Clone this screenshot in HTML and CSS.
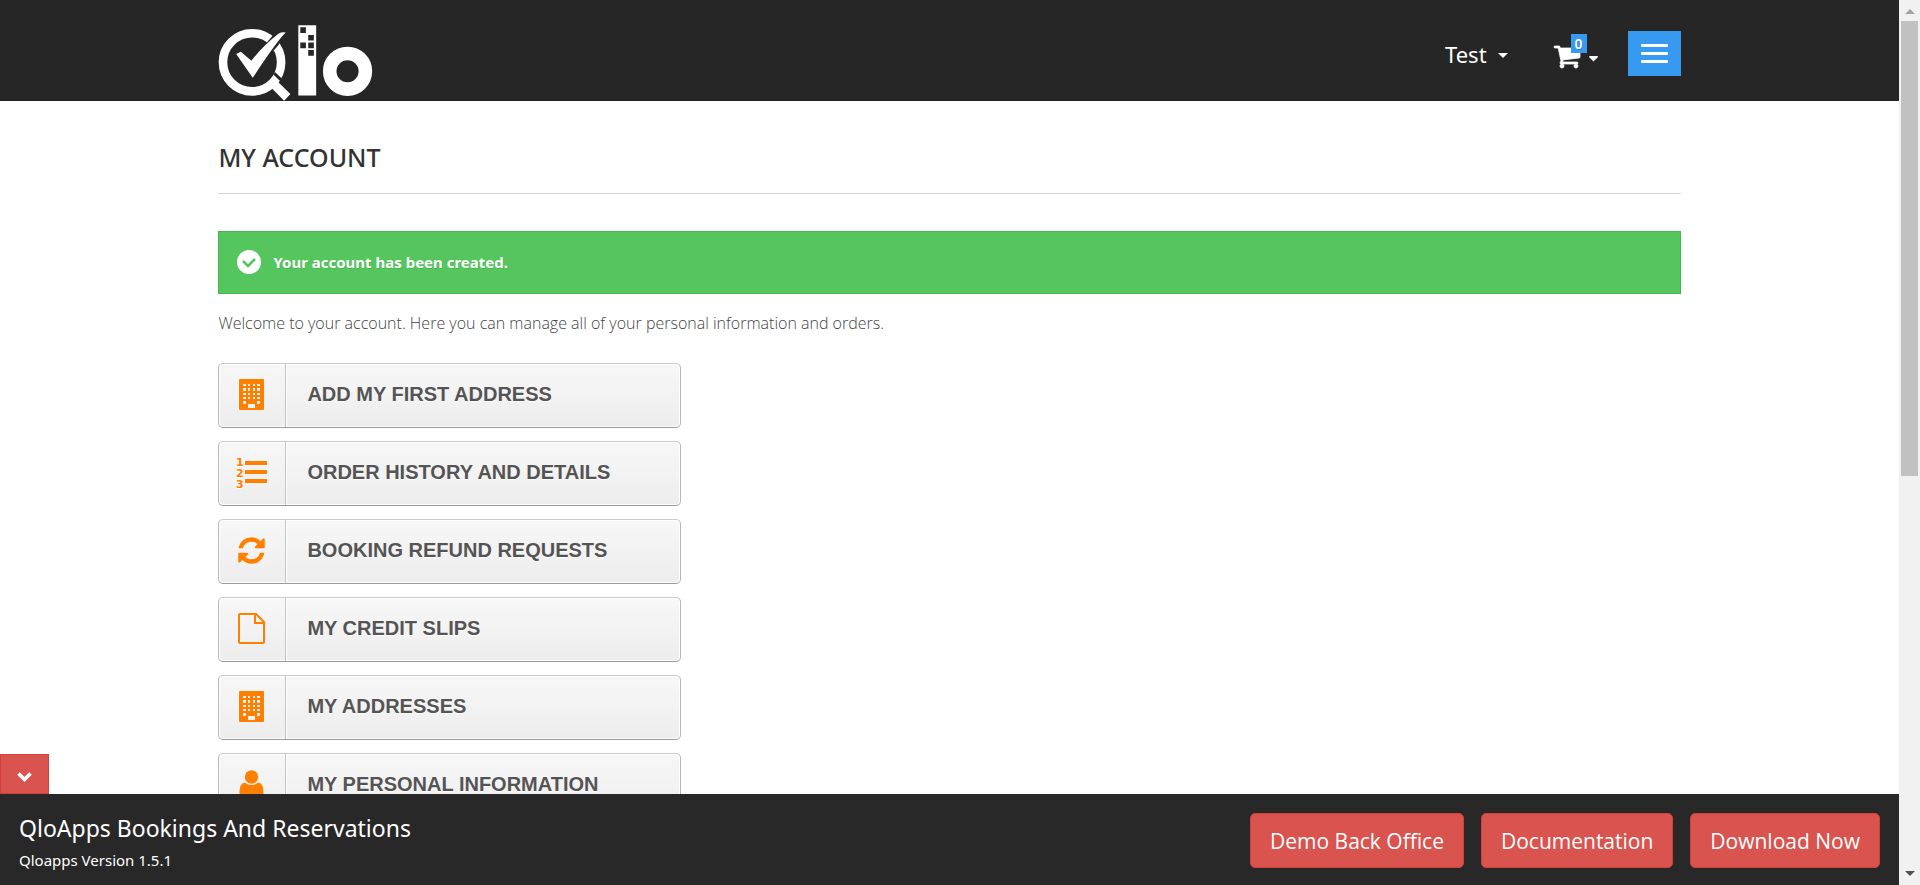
FILE: index.html
```html
<!DOCTYPE html>
<html lang="en">
<head>
<meta charset="utf-8">
<title>My account - QloApps</title>
<link rel="stylesheet" href="styles.css">
</head>
<body>
<svg class="defs" aria-hidden="true">
  <symbol id="building" viewBox="0 0 25 31">
    <path fill-rule="evenodd" d="M1 0h23q1 0 1 1v29q0 1-1 1H1q-1 0-1-1V1q0-1 1-1zM4 5v2h3V5zM9 5v2h2V5zM14 5v2h2V5zM18 5v2h3V5zM4 9v3h3V9zM9 9v3h2V9zM14 9v3h2V9zM18 9v3h3V9zM4 14v2h3v-2zM9 14v2h2v-2zM14 14v2h2v-2zM18 14v2h3v-2zM4 18v2h3v-2zM9 18v2h2v-2zM14 18v2h2v-2zM18 18v2h3v-2zM4 22v3h3v-3zM18 22v3h3v-3zM9 25v4h7v-4z"/>
  </symbol>
</svg>
<div class="window">
  <div class="page">
    <header class="header">
      <div class="container header-row">
        <a class="logo" href="#" aria-label="Qlo">
          <svg viewBox="54 44 468 230">
            <circle cx="155" cy="157" r="88" fill="none" stroke="#fff" stroke-width="26"/>
            <path d="M222 190L252 219" stroke="#262626" stroke-width="9"/>
            <path d="M200 222L219 202L271 253L252 273L217 238z" fill="#fff"/>
            <path d="M192 106L226 66L262 58L234 106L222 120z" fill="#262626"/>
            <path d="M107 132L121 125L153 152Q190 105 236 70Q246 64 257 67Q232 90 157 204z" fill="#fff"/>
            <path d="M295 45h54v212h-54z" fill="#fff"/>
            <path d="M301 51h17v17h-17zM325 74h17v17h-17zM301 97h17v17h-17zM325 97h17v17h-17zM325 120h17v17h-17z" fill="#262626"/>
            <circle cx="444" cy="184" r="54" fill="none" stroke="#fff" stroke-width="41"/>
          </svg>
        </a>
        <nav class="nav">
          <button class="user" type="button">Test<span class="caret"></span></button>
          <button class="cart" type="button" aria-label="Cart">
            <svg class="cart-icon" viewBox="0 0 1792 1792"><path d="M704 1536q0 52-38 90t-90 38-90-38-38-90 38-90 90-38 90 38 38 90zm896 0q0 52-38 90t-90 38-90-38-38-90 38-90 90-38 90 38 38 90zm128-1088v512q0 24-16.5 42.5t-40.5 21.5l-1044 122q13 60 13 70 0 16-24 64h920q26 0 45 19t19 45-19 45-45 19h-1024q-26 0-45-19t-19-45q0-11 8-31.5t16-36 21.5-40 15.5-29.5l-177-823h-204q-26 0-45-19t-19-45 19-45 45-19h256q16 0 28.5 6.5t19.5 15.5 13 24.5 8 26 5.5 29.5 4.5 26h1201q26 0 45 19t19 45z"/></svg>
            <span class="badge">0</span>
            <svg class="cart-caret" viewBox="0 0 9 6"><path d="M1 0h7q1 0 1 1L5 5q-.5.5-1 0L0 1q0-1 1-1z"/></svg>
          </button>
          <button class="menu" type="button" aria-label="Menu"><span></span><span></span><span></span></button>
        </nav>
      </div>
    </header>
    <main class="main">
      <div class="container">
        <h1 class="title">MY ACCOUNT</h1>
        <p class="alert">
          <svg viewBox="0 0 24 24"><circle cx="12" cy="12" r="12" fill="#fff"/><path d="M6 11l5 5 7-7" fill="none" stroke="#55c65e" stroke-width="2.6"/></svg>
          Your account has been created.
        </p>
        <p class="welcome">Welcome to your account. Here you can manage all of your personal information and orders.</p>
        <ul class="links">
          <li><a href="#"><span class="icon"><svg class="building"><use href="#building"/></svg></span><span class="label">ADD MY FIRST ADDRESS</span></a></li>
          <li><a href="#"><span class="icon"><svg class="list" viewBox="0 0 31 32"><path d="M9 4h22v4H9zM9 13h22v4H9zM9 22h22v4H9z"/><text x="0" y="9">1</text><text x="0" y="20">2</text><text x="0" y="31">3</text></svg></span><span class="label">ORDER HISTORY AND DETAILS</span></a></li>
          <li><a href="#"><span class="icon"><svg class="refresh" viewBox="0 0 1792 1792"><path d="M1639 1056q0 5-1 7-64 268-268 434.5t-478 166.5q-146 0-282.5-55t-243.5-157l-129 129q-19 19-45 19t-45-19-19-45v-448q0-26 19-45t45-19h448q26 0 45 19t19 45-19 45l-137 137q71 66 161 102t187 36q134 0 250-65t186-179q11-17 53-117 8-23 30-23h192q13 0 22.5 9.5t9.5 22.5zm25-800v448q0 26-19 45t-45 19h-448q-26 0-45-19t-19-45 19-45l138-138q-148-137-349-137-134 0-250 65t-186 179q-11 17-53 117-8 23-30 23h-199q-13 0-22.5-9.5t-9.5-22.5v-7q65-268 270-434.5t480-166.5q146 0 284 55.5t245 156.5l130-129q19-19 45-19t45 19 19 45z"/></svg></span><span class="label">BOOKING REFUND REQUESTS</span></a></li>
          <li><a href="#"><span class="icon"><svg class="file" viewBox="0 0 27 31"><path d="M2 1h16l8 8v20q0 1-1 1H2q-1 0-1-1V2q0-1 1-1zM17 1v9h9" fill="none" stroke="#ff8000" stroke-width="2"/></svg></span><span class="label">MY CREDIT SLIPS</span></a></li>
          <li><a href="#"><span class="icon"><svg class="building"><use href="#building"/></svg></span><span class="label">MY ADDRESSES</span></a></li>
          <li><a href="#"><span class="icon"><svg class="person" viewBox="0 0 25 29"><circle cx="12.500" cy="7" r="6.700"/><path d="M5.500 12.500q7 5 14 0 5 1 5 10 0 5-5 5.500h-14q-5-.5-5-5.500 0-9 5-10z"/></svg></span><span class="label">MY PERSONAL INFORMATION</span></a></li>
        </ul>
      </div>
      <button class="collapse" type="button" aria-label="Collapse"><svg viewBox="0 0 15 10"><path d="M1.500 1.500l6 6 6-6" fill="none" stroke="#fff" stroke-width="3.600"/></svg></button>
    </main>
    <footer class="footer">
      <div class="about">
        <p class="product">QloApps Bookings And Reservations</p>
        <p class="version">Qloapps Version 1.5.1</p>
      </div>
      <div class="actions">
        <a href="#">Demo Back Office</a>
        <a href="#">Documentation</a>
        <a href="#">Download Now</a>
      </div>
    </footer>
  </div>
  <div class="scrollbar" aria-hidden="true">
    <span class="arrow up"></span>
    <span class="track"><span class="thumb"></span></span>
    <span class="arrow down"></span>
  </div>
</div>
</body>
</html>
```
FILE: styles.css
```css
* { box-sizing: border-box; }
body, h1, p, ul { margin: 0; padding: 0; }
body { font-family: "Noto Sans", "Open Sans", sans-serif; font-size: 16px; color: #777; background: #fff; }
button { font: inherit; border: 0; background: none; padding: 0; color: inherit; cursor: pointer; }
a { color: inherit; text-decoration: none; }
svg { display: block; }
.defs { position: absolute; width: 0; height: 0; }

.window { display: grid; grid-template-columns: 1fr 21px; height: 100vh; overflow: hidden; }
.page { display: flex; flex-direction: column; min-width: 0; min-height: 0; }
.container { width: 77%; margin: 0 auto; }

.header { background: #262626; color: #fff; }
.header-row { display: flex; justify-content: space-between; align-items: flex-end; height: 101px; }
.logo svg { width: 156px; height: 76px; }
.nav { display: flex; align-items: center; height: 95px; }
.user { display: flex; align-items: center; gap: 11px; font-size: 22px; }
.caret { border: 5px solid transparent; border-top-color: #fff; border-bottom: 0; margin-top: 4px; }
.cart { position: relative; display: flex; align-items: center; gap: 8px; margin: 4px 30px 0 45px; }
.cart-icon { width: 28px; height: 28px; fill: #fff; stroke: #fff; stroke-width: 50px; }
.cart-caret { width: 9px; height: 6px; margin-top: 6px; fill: #fff; }
.badge { position: absolute; left: 18px; top: -8px; width: 16px; height: 19px; background: #3799ef; font-size: 14px; line-height: 19px; font-weight: 600; text-align: center; text-shadow: 1px 1px rgba(0, 0, 0, .2); }
.menu { display: flex; flex-direction: column; align-items: center; justify-content: center; gap: 5px; width: 53px; height: 45px; background: #3799ef; }
.menu span { width: 27px; height: 3px; border-radius: 1px; background: #fff; }

.main { position: relative; flex: 1; min-height: 0; overflow: hidden; }
.title { padding: 39px 0 18px; border-bottom: 1px solid #d6d4d4; font-size: 25px; line-height: 35px; font-weight: 500; color: #333; }
.alert { display: flex; align-items: center; gap: 12px; height: 63px; margin-top: 37px; padding: 0 18px 2px; border: 1px solid #48b151; background: #55c65e; color: #fff; font-size: 15px; font-weight: 700; text-shadow: 1px 1px rgba(0, 0, 0, .1); }
.alert svg { width: 24px; height: 24px; }
.welcome { margin: 17px 0 28px; line-height: 24px; font-family: "Open Sans", "Noto Sans", sans-serif; font-weight: 300; color: #444; }

.links { display: flex; flex-direction: column; gap: 13px; width: 463px; list-style: none; }
.links a { display: flex; height: 65px; border: 1px solid; border-color: #cacaca #b7b7b7 #9a9a9a; border-radius: 5px; background: linear-gradient(#f7f7f7, #ededed); box-shadow: inset 0 0 0 1px #fff; font-family: "Liberation Sans", Arial, sans-serif; font-size: 20px; font-weight: 700; color: #555454; text-shadow: 0 1px #fff; }
.icon { width: 67px; padding: 0 2px 2px 0; display: flex; align-items: center; justify-content: center; border-right: 1px solid #c4c4c4; fill: #ff8000; }
.label { flex: 1; padding-left: 20px; line-height: 61px; border-left: 1px solid #fff; }
.building { width: 25px; height: 31px; }
.list { width: 31px; height: 32px; overflow: visible; font-family: "DejaVu Sans", sans-serif; font-size: 11px; }
.refresh { width: 31px; height: 31px; }
.file { width: 27px; height: 31px; }
.person { width: 25px; height: 29px; }

.collapse { position: absolute; left: 0; bottom: 0; width: 49px; height: 40px; display: flex; align-items: center; justify-content: center; padding-top: 5px; border: 1px solid #d43f3a; background: #d9534f; }
.collapse svg { width: 15px; height: 10px; }

.footer { display: flex; justify-content: space-between; align-items: center; height: 91px; padding: 2px 19px 0; background: #282828; color: #fff; }
.product { padding-top: 4px; font-size: 23px; line-height: 34px; }
.version { font-size: 15px; line-height: 30px; }
.actions { display: flex; gap: 17px; }
.actions a { display: flex; align-items: center; height: 55px; padding: 0 19px; border: 1px solid #d43f3a; border-radius: 5px; background: #d9534f; font-size: 21px; font-family: "Open Sans", "Noto Sans", sans-serif; }

.scrollbar { display: flex; flex-direction: column; align-items: center; justify-content: space-between; background: #f1f1f1; }
.track { flex: 1; width: 17px; margin: 7px 0; }
.thumb { display: block; height: 54%; background: #c1c1c1; }
.arrow { border: 5px solid transparent; }
.up { margin-top: 9px; border-top: 0; border-bottom-color: #a3a3a3; }
.down { margin-bottom: 9px; border-bottom: 0; border-top-color: #505050; }
```
